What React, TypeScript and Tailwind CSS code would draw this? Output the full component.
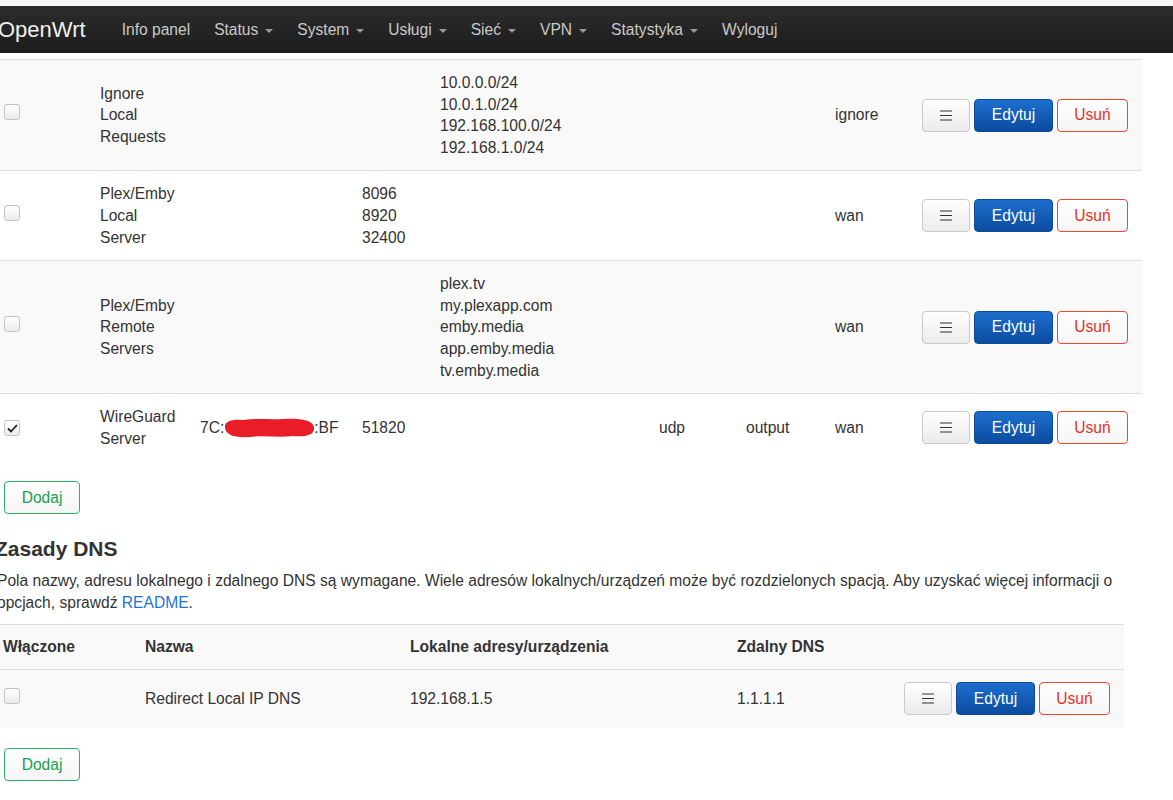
import React from "react";

const navItems = [
	{ label: "Info panel", caret: false },
	{ label: "Status", caret: true },
	{ label: "System", caret: true },
	{ label: "Usługi", caret: true },
	{ label: "Sieć", caret: true },
	{ label: "VPN", caret: true },
	{ label: "Statystyka", caret: true },
	{ label: "Wyloguj", caret: false },
];

function Checkbox({ checked = false }: { checked?: boolean }) {
	return (
		<span className="inline-flex h-4 w-4 items-center justify-center rounded-[3px] border border-[#c4c4c4] bg-gradient-to-b from-white to-[#ececec]">
			{checked && (
				<svg width="11" height="9" viewBox="0 0 11 9">
					<path d="M1 4.5 L4 7.5 L10 1" fill="none" stroke="#222" strokeWidth="1.8" />
				</svg>
			)}
		</span>
	);
}

function Actions() {
	return (
		<div className="flex items-center gap-1">
			<button className="flex h-[33px] w-[48px] items-center justify-center rounded-[4px] border border-[#c9c9c9] bg-gradient-to-b from-white to-[#ebebeb]">
				<svg width="12" height="11" viewBox="0 0 12 11">
					<path d="M0 1h12M0 5.5h12M0 10h12" stroke="#333" strokeWidth="1.2" />
				</svg>
			</button>
			<button className="h-[33px] w-[79px] rounded-[4px] border border-[#0d4a97] bg-gradient-to-b from-[#1d6ecf] to-[#0b4c9f] text-white">
				Edytuj
			</button>
			<button className="h-[33px] w-[71px] rounded-[4px] border border-[#f2472f] bg-gradient-to-b from-white to-[#f6f6f6] text-[#e8302a]">
				Usuń
			</button>
		</div>
	);
}

function AddButton() {
	return (
		<button className="h-[33px] w-[76px] rounded-[4px] border border-[#2bb463] bg-gradient-to-b from-white to-[#f5f5f5] text-[#17a04c]">
			Dodaj
		</button>
	);
}

function Lines({ items }: { items: string[] }) {
	return (
		<div className="flex flex-col">
			{items.map((t) => (
				<span key={t}>{t}</span>
			))}
		</div>
	);
}

function Redacted() {
	return (
		<svg width="92" height="20" viewBox="0 0 92 20" className="-mx-px inline-block align-middle">
			<path
				d="M2 10 C1 3 9 1 20 2 C34 0 48 2 60 1 C74 0 89 1 91 9 C92 17 83 19 70 18 C56 20 41 17 26 19 C12 20 3 17 2 10 Z"
				fill="#ea1c28"
			/>
		</svg>
	);
}

const ruleCols = "grid grid-cols-[96px_100px_162px_78px_219px_87px_89px_87px_228px] items-center";

type Rule = {
	checked?: boolean;
	name: string[];
	mac?: boolean;
	ports?: string[];
	dest?: string[];
	proto?: string;
	chain?: string;
	iface: string;
	bg: string;
};

const rules: Rule[] = [
	{
		name: ["Ignore", "Local", "Requests"],
		dest: ["10.0.0.0/24", "10.0.1.0/24", "192.168.100.0/24", "192.168.1.0/24"],
		iface: "ignore",
		bg: "bg-[#f9f9f9]",
	},
	{
		name: ["Plex/Emby", "Local", "Server"],
		ports: ["8096", "8920", "32400"],
		iface: "wan",
		bg: "bg-white",
	},
	{
		name: ["Plex/Emby", "Remote", "Servers"],
		dest: ["plex.tv", "my.plexapp.com", "emby.media", "app.emby.media", "tv.emby.media"],
		iface: "wan",
		bg: "bg-[#f9f9f9]",
	},
	{
		checked: true,
		name: ["WireGuard", "Server"],
		mac: true,
		ports: ["51820"],
		proto: "udp",
		chain: "output",
		iface: "wan",
		bg: "bg-white",
	},
];

export default function App() {
	return (
		<div className="min-h-[800px] overflow-hidden bg-white font-['Liberation_Sans',Arial,sans-serif] text-[15.6px] leading-[21.6px] text-[#333]">
			<div className="h-[6px] bg-[#f7f7f7]" />
			<header className="flex h-[47px] items-center bg-gradient-to-b from-[#2c2c2c] to-[#1c1c1c]">
				<span className="ml-[-2px] mr-[24px] text-[22px] text-[#eeeeee]">OpenWrt</span>
				{navItems.map((n) => (
					<span key={n.label} className="flex items-center px-3 text-[#c9c9c9]">
						{n.label}
						{n.caret && (
							<span className="ml-[7px] mt-[2px] h-0 w-0 border-x-[4px] border-t-[4px] border-x-transparent border-t-[#9a9a9a]" />
						)}
					</span>
				))}
			</header>
			<div className="h-[6px]" />

			<div className="ml-[-4px]">
				{/* Rules table */}
				<div className="w-[1146px]">
					{rules.map((r, i) => (
						<div key={i} className={`${ruleCols} ${r.bg} border-t border-[#dddddd]`}>
							<div className="px-2 py-3">
								<Checkbox checked={r.checked} />
							</div>
							<div className="px-2 py-3">
								<Lines items={r.name} />
							</div>
							<div className="px-2 py-3">
								{r.mac && (
									<span className="flex items-center whitespace-nowrap">
										7C:
										<Redacted />
										:BF
									</span>
								)}
							</div>
							<div className="px-2 py-3">{r.ports && <Lines items={r.ports} />}</div>
							<div className="px-2 py-3">{r.dest && <Lines items={r.dest} />}</div>
							<div className="px-2 py-3">{r.proto}</div>
							<div className="px-2 py-3">{r.chain}</div>
							<div className="px-2 py-3">{r.iface}</div>
							<div className="px-2 py-3">
								<Actions />
							</div>
						</div>
					))}
				</div>

				<div className="mt-[20px] pl-2">
					<AddButton />
				</div>

				<h3 className="mt-[23px] ml-[-1px] text-[21px] font-bold leading-[23px] text-[#333]">Zasady DNS</h3>
				<p className="mt-[10px] ml-[1px] whitespace-nowrap leading-[22px]">
					Pola nazwy, adresu lokalnego i zdalnego DNS są wymagane. Wiele adresów lokalnych/urządzeń może być rozdzielonych spacją. Aby uzyskać więcej informacji o
					<br />
					opcjach, sprawdź <span className="text-[#1f74d4]">README</span>.
				</p>

				{/* DNS table */}
				<div className="mt-[10px] w-[1128px]">
					<div className="grid grid-cols-[141px_265px_327px_167px_228px] items-center border-y border-[#dddddd] bg-[#f9f9f9] font-bold text-[#333]">
						<div className="px-[7px] py-[11px]">Włączone</div>
						<div className="px-2 py-[11px]">Nazwa</div>
						<div className="px-2 py-[11px]">Lokalne adresy/urządzenia</div>
						<div className="px-2 py-[11px]">Zdalny DNS</div>
						<div className="px-2 py-[11px]" />
					</div>
					<div className="grid grid-cols-[141px_265px_327px_167px_228px] items-center bg-[#f9f9f9]">
						<div className="px-2 py-3">
							<Checkbox />
						</div>
						<div className="px-2 py-3">Redirect Local IP DNS</div>
						<div className="px-2 py-3">192.168.1.5</div>
						<div className="px-2 py-3">1.1.1.1</div>
						<div className="px-2 py-3">
							<Actions />
						</div>
					</div>
				</div>

				<div className="mt-[21px] pl-2">
					<AddButton />
				</div>
			</div>
		</div>
	);
}
